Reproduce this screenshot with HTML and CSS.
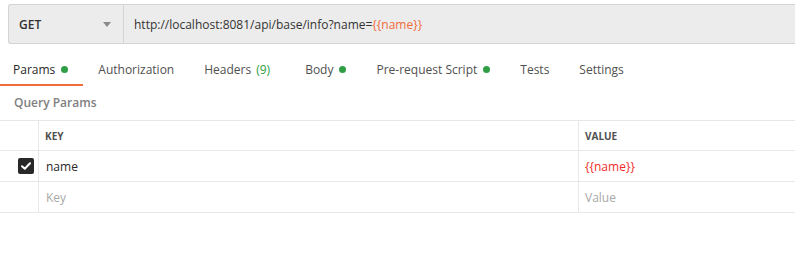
FILE: index.html
```html
<!DOCTYPE html>
<html>
<head>
<meta charset="utf-8">
<link rel="stylesheet" href="styles.css">
</head>
<body>
<div class="urlbar">
  <div class="method"><span>GET</span><span class="caret"></span></div>
  <div class="url">http://localhost:8081/api/base/info?name=<span class="var">{{name}}</span></div>
</div>
<div class="tabs">
  <div class="tab active">Params<span class="dot"></span></div>
  <div class="tab">Authorization</div>
  <div class="tab tab-headers">Headers <span class="count">(9)</span></div>
  <div class="tab">Body<span class="dot"></span></div>
  <div class="tab">Pre-request Script<span class="dot"></span></div>
  <div class="tab">Tests</div>
  <div class="tab">Settings</div>
</div>
<div class="section-title">Query Params</div>
<div class="table">
  <div class="row head">
    <div class="cell check"></div>
    <div class="cell key">KEY</div>
    <div class="cell value">VALUE</div>
  </div>
  <div class="row">
    <div class="cell check"><span class="checkbox"><svg width="10" height="8" viewBox="0 0 10 8"><path d="M1 4.2 L3.8 6.8 L9 1.2" fill="none" stroke="#fff" stroke-width="2" stroke-linecap="round" stroke-linejoin="round"/></svg></span></div>
    <div class="cell key">name</div>
    <div class="cell value red">{{name}}</div>
  </div>
  <div class="row">
    <div class="cell check"></div>
    <div class="cell key placeholder">Key</div>
    <div class="cell value placeholder">Value</div>
  </div>
</div>
</body>
</html>
```
FILE: styles.css
```css
* { box-sizing: border-box; }
body {
  margin: 0;
  font-family: "Open Sans", "DejaVu Sans", sans-serif;
  font-size: 12px;
  color: #505050;
  background: #fff;
}
.urlbar {
  margin: 4px 0 0 8px;
  height: 40px;
  display: flex;
  background: #ececec;
  border: 1px solid #d4d4d4;
  border-right: none;
  border-radius: 3px 0 0 3px;
}
.method {
  width: 115px;
  border-right: 1px solid #d4d4d4;
  display: flex;
  align-items: center;
  justify-content: space-between;
  padding: 0 12px 0 10px;
  font-weight: 600;
  color: #333;
}
.caret {
  width: 0;
  height: 0;
  border-left: 4px solid transparent;
  border-right: 4px solid transparent;
  border-top: 5px solid #8a8a8a;
}
.url {
  display: flex;
  align-items: center;
  padding-left: 10px;
  color: #333;
}
.var { color: #f26b3a; }
.tabs {
  display: flex;
  margin-top: 11px;
}
.tab {
  height: 31px;
  line-height: 29px;
  padding: 0 15px;
  border-bottom: 2px solid transparent;
  color: #505050;
  display: flex;
  align-items: center;
  white-space: nowrap;
}
.tab:first-child { padding-left: 13px; }
.tab.tab-headers { padding-right: 20px; }
.tab.active {
  color: #282828;
  border-bottom-color: #f26b3a;
}
.dot {
  width: 7px;
  height: 7px;
  border-radius: 50%;
  background: #2f9e44;
  margin-left: 6px;
}
.count { color: #2f9e44; margin-left: 5px; }
.section-title {
  height: 34px;
  line-height: 34px;
  padding-left: 14px;
  font-weight: 600;
  color: #808080;
}
.table {
  border-top: 1px solid #e8e8e8;
}
.row {
  display: grid;
  grid-template-columns: 38px 540px 1fr;
  height: 31px;
  border-bottom: 1px solid #e8e8e8;
}
.row.head { height: 30px; }
.cell {
  display: flex;
  align-items: center;
}
.cell.key, .cell.value {
  border-left: 1px solid #e8e8e8;
  padding-left: 7px;
  color: #282828;
}
.cell.value { padding-left: 6px; }
.head .cell.key, .head .cell.value {
  font-size: 10px;
  font-weight: 700;
  color: #505050;
  padding-left: 6px;
}
.check { justify-content: flex-end; padding-right: 4px; }
.checkbox {
  width: 16px;
  height: 16px;
  border-radius: 2px;
  background: #282828;
  display: flex;
  align-items: center;
  justify-content: center;
}
.red { color: #ef2b2b !important; }
.placeholder { color: #a8a8a8 !important; }
```
